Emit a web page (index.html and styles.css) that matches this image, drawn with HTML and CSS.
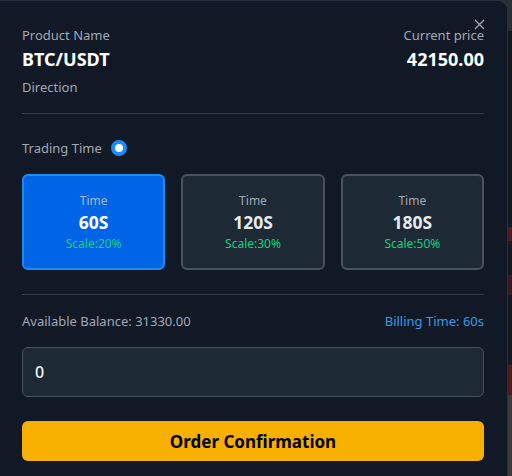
FILE: index.html
```html
<!DOCTYPE html>
<html>
<head>
<meta charset="utf-8">
<link rel="stylesheet" href="styles.css">
</head>
<body>
<div class="page">
  <div class="modal">
    <button class="close" aria-label="close">
      <svg width="11" height="11" viewBox="0 0 11 11"><path d="M1 1L10 10M10 1L1 10" stroke="#a3a9b3" stroke-width="1.3" fill="none"/></svg>
    </button>
    <div class="head">
      <div class="col">
        <div class="label">Product Name</div>
        <div class="value">BTC/USDT</div>
        <div class="label dir">Direction</div>
      </div>
      <div class="col right">
        <div class="label">Current price</div>
        <div class="value">42150.00</div>
      </div>
    </div>
    <div class="divider"></div>
    <div class="tt">
      <span class="label">Trading Time</span>
      <span class="radio"></span>
    </div>
    <div class="cards">
      <div class="card active">
        <div class="c-t">Time</div>
        <div class="c-v">60S</div>
        <div class="c-s">Scale:20%</div>
      </div>
      <div class="card">
        <div class="c-t">Time</div>
        <div class="c-v">120S</div>
        <div class="c-s">Scale:30%</div>
      </div>
      <div class="card">
        <div class="c-t">Time</div>
        <div class="c-v">180S</div>
        <div class="c-s">Scale:50%</div>
      </div>
    </div>
    <div class="divider d2"></div>
    <div class="bal">
      <span class="label">Available Balance: 31330.00</span>
      <span class="bill">Billing Time: 60s</span>
    </div>
    <div class="input">0</div>
    <button class="confirm">Order Confirmation</button>
  </div>
  <div class="side">
    <div class="s-top"></div>
    <div class="s-a"></div>
    <div class="s-red"></div>
    <div class="s-b"></div>
    <div class="s-red2"></div>
    <div class="s-c"></div>
    <div class="s-red3"></div>
    <div class="s-gray"></div>
  </div>
</div>
</body>
</html>
```
FILE: styles.css
```css
* { box-sizing: border-box; }
html, body { margin: 0; padding: 0; }
body {
  background: #15181e;
  font-family: "Noto Sans", "Open Sans", sans-serif;
  width: 512px;
  height: 476px;
  overflow: hidden;
}
.page {
  display: flex;
  height: 476px;
  padding-top: 1px;
  background: #2a2f37;
}
.modal {
  position: relative;
  width: 507px;
  flex: none;
  background: #111927;
  border-top-right-radius: 9px;
  padding: 25px 23px 0 22px;
  height: 480px;
}
.close {
  position: absolute;
  top: 18px;
  right: 22px;
  background: none;
  border: 0;
  padding: 0;
  width: 11px;
  height: 11px;
  display: block;
}
.close svg { display: block; }
.head {
  display: flex;
  justify-content: space-between;
}
.col { display: flex; flex-direction: column; }
.col.right { align-items: flex-end; }
.label {
  font-size: 13px;
  line-height: 18px;
  color: #a1a8b3;
}
.value {
  margin-top: 4px;
  font-size: 18px;
  line-height: 22px;
  font-weight: 700;
  color: #ffffff;
}
.dir { margin-top: 8px; }
.divider {
  margin-top: 17px;
  height: 1px;
  background: #333c4a;
}
.tt {
  margin-top: 25px;
  display: flex;
  align-items: center;
  gap: 9px;
}
.radio {
  width: 16px;
  height: 16px;
  border-radius: 50%;
  background: #ffffff;
  border: 4px solid #1a8cf5;
}
.cards {
  margin-top: 17px;
  display: grid;
  grid-template-columns: repeat(3, 1fr);
  gap: 16px;
}
.card {
  height: 96px;
  border-radius: 6px;
  background: #1e2936;
  border: 2px solid #48525e;
  display: flex;
  flex-direction: column;
  align-items: center;
  justify-content: center;
  gap: 2px;
}
.card.active {
  background: #0064e6;
  border-color: #1b8cf2;
}
.c-t {
  font-size: 12px;
  line-height: 16px;
  color: #a1a8b3;
}
.card.active .c-t { color: #a8b8d8; }
.c-v {
  font-size: 17.5px;
  line-height: 22px;
  font-weight: 700;
  color: #e8eaed;
}
.card.active .c-v { color: #ffffff; }
.c-s {
  margin-top: 1px;
  font-size: 12px;
  line-height: 16px;
  color: #19d07f;
}
.d2 { margin-top: 24px; }
.bal {
  margin-top: 17px;
  display: flex;
  justify-content: space-between;
  align-items: center;
}
.bill {
  font-size: 13px;
  line-height: 18px;
  color: #3a9ae6;
}
.input {
  margin-top: 17px;
  height: 50px;
  border-radius: 6px;
  background: #1e2936;
  border: 1px solid #48525e;
  display: flex;
  align-items: center;
  padding-left: 12px;
  font-size: 16px;
  font-weight: 500;
  color: #f2f2f2;
}
.confirm {
  margin-top: 24px;
  width: 100%;
  height: 40px;
  border: 0;
  border-radius: 6px;
  background: #f7b000;
  color: #000000;
  font-family: inherit;
  font-size: 17px;
  font-weight: 700;
  display: block;
}
.side {
  flex: 1;
  display: flex;
  flex-direction: column;
  background: #15181e;
  border-left: 1px solid #2a2f37;
}
.s-top { height: 30px; background: #2a2f37; }
.s-a { height: 196px; background: #131821; }
.s-red { height: 14px; background: #4e1c1e; }
.s-b { height: 34px; background: #131821; }
.s-red2 { height: 20px; background: #3a1a1e; }
.s-c { height: 70px; background: #131821; }
.s-red3 { height: 30px; background: #4e1c1e; }
.s-gray { flex: 1; background: #3a3a3a; }
```
